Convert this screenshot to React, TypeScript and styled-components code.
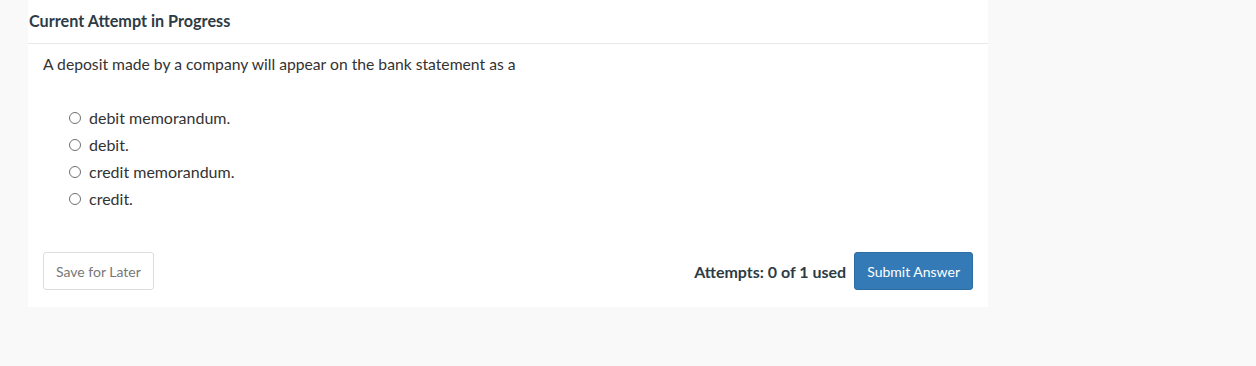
import React from 'react'
import styled, { createGlobalStyle } from 'styled-components'

const GlobalStyle = createGlobalStyle`
  body {
    margin: 0;
    background: #f9f9f9;
    font-family: Lato, 'Open Sans', sans-serif;
    color: #333333;
  }
`

const Page = styled.div`
  height: 366px;
  padding-left: 28px;
`

const Card = styled.div`
  width: 960px;
  background: #ffffff;
`

const Header = styled.div`
  height: 43px;
  line-height: 41px;
  font-size: 16.2px;
  font-weight: 700;
  color: #2d3b45;
  border-bottom: 1px solid #e8e8e8;
  padding-left: 1px;
`

const Body = styled.div`
  padding: 10px 15px 17px 15px;
`

const Question = styled.p`
  margin: 0;
  font-size: 15.7px;
  line-height: 20px;
  color: #333333;
`

const Options = styled.div`
  margin-top: 30px;
  padding-left: 26px;
  display: flex;
  flex-direction: column;
`

const Option = styled.label`
  display: flex;
  align-items: center;
  gap: 8px;
  height: 27px;
  font-size: 16px;
  color: #333333;
  cursor: pointer;
`

const Radio = styled.input`
  appearance: none;
  margin: 0;
  width: 12px;
  height: 12px;
  border: 1px solid #6f6f6f;
  border-radius: 50%;
  background: #ffffff;
  &:checked {
    box-shadow: inset 0 0 0 3px #ffffff;
    background: #337ab7;
  }
`

const Footer = styled.div`
  margin-top: 40px;
  display: flex;
  align-items: center;
  justify-content: space-between;
`

const Actions = styled.div`
  display: flex;
  align-items: center;
  gap: 8px;
`

const Attempts = styled.span`
  font-size: 16px;
  font-weight: 700;
  color: #2d3b45;
`

interface ButtonProps {
  primary?: boolean
}

const Button = styled.button<ButtonProps>`
  height: 38px;
  padding: 0 12px;
  font-family: Lato, 'Open Sans', sans-serif;
  font-size: 14px;
  border-radius: 3px;
  border: 1px solid ${(p) => (p.primary ? '#2e6da4' : '#dddddd')};
  background: ${(p) => (p.primary ? '#337ab7' : '#ffffff')};
  color: ${(p) => (p.primary ? '#ffffff' : '#777777')};
  cursor: pointer;
`

const choices = ['debit memorandum.', 'debit.', 'credit memorandum.', 'credit.']

const App = () => {
  return (
    <Page>
      <GlobalStyle />
      <Card>
        <Header>Current Attempt in Progress</Header>
        <Body>
          <Question>A deposit made by a company will appear on the bank statement as a</Question>
          <Options>
            {choices.map((c) => (
              <Option key={c}>
                <Radio type="radio" name="answer" />
                {c}
              </Option>
            ))}
          </Options>
          <Footer>
            <Button>Save for Later</Button>
            <Actions>
              <Attempts>Attempts: 0 of 1 used</Attempts>
              <Button primary>Submit Answer</Button>
            </Actions>
          </Footer>
        </Body>
      </Card>
    </Page>
  )
}

export default App
